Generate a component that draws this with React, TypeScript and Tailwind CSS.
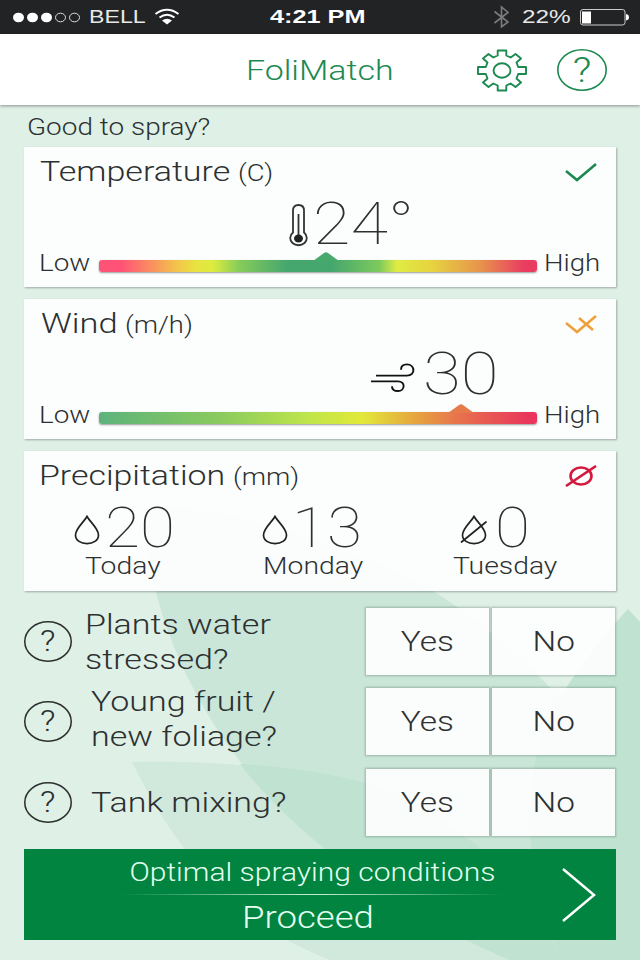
import clsx from "clsx";
import type { ReactNode } from "react";

type TextProps = { className?: string; children: ReactNode };

// The whole interface is set in a slightly extended Roboto
function Text({ className, children }: TextProps) {
  return (
    <span
      className={clsx(
        "inline-block origin-left whitespace-nowrap",
        className
      )}
    >
      {children}
    </span>
  );
}

function Leaves() {
  return (
    <svg
      className="absolute inset-0 -z-10"
      width="640"
      height="960"
      viewBox="0 0 640 960"
    >
      <rect width="640" height="960" fill="#dff0e7" />
      <path
        d="M132 762C190 761 270 763 365 783C430 805 480 850 530 900L560 960H330C240 925 180 860 132 762Z"
        fill="#d1e8dc"
      />
      <path
        d="M143 508C240 505 350 548 433 591C480 620 520 655 560 698L640 800V960H510C440 930 380 895 320 845C230 770 150 650 143 508Z"
        fill="#cae6d8"
      />
      <path
        d="M240 764C290 767 330 773 365 783C410 797 440 817 465 837C500 860 540 900 560 960H510C440 930 380 895 320 845C290 820 260 790 240 764Z"
        fill="#bfe2d1"
      />
      <path
        d="M628 609C604 635 580 665 560 698C535 735 525 800 532 850C545 900 550 930 560 960H640V622Z"
        fill="#bfe2d1"
      />
    </svg>
  );
}

function StatusBar() {
  return (
    <div className="flex h-[34px] items-center bg-[#222325] font-['Liberation_Sans'] text-[19px] text-white">
      <svg width="640" height="34" viewBox="0 0 640 34" fill="none">
        <g fill="#fff">
          <ellipse cx="18.500" cy="17.500" rx="5.500" ry="4.800" />
          <ellipse cx="32.500" cy="17.500" rx="5.500" ry="4.800" />
          <ellipse cx="46.500" cy="17.500" rx="5.500" ry="4.800" />
        </g>
        <g stroke="#ddd">
          <ellipse cx="60.500" cy="17.500" rx="5" ry="4.300" />
          <ellipse cx="74.500" cy="17.500" rx="5" ry="4.300" />
        </g>
        <g stroke="#fff" strokeWidth="2">
          <path d="M155.500 14Q167 5.500 178.500 14" />
          <path d="M159.500 17.500Q167 12 174.500 17.500" />
        </g>
        <path d="M162 20.500Q167 17 172 20.500L167 24.500Z" fill="#fff" />
        <path
          d="M494.500 11.500L508 22L501.500 27V7L508 12.500L494.500 23"
          stroke="#7b7c7e"
          strokeWidth="1.600"
        />
        <rect x="580.500" y="9.500" width="44.500" height="15.500" rx="2.500" stroke="#ccc" />
        <rect x="582" y="11.500" width="9" height="12" fill="#fff" />
        <path d="M626 14Q629 14.500 629 17.200T626 20.500Z" fill="#fff" />
      </svg>
      <div className="absolute left-0 top-0 flex h-[35px] w-full items-center">
        <Text className="ml-[89px] w-[181px] scale-x-[1.22] text-[#e8e8e8]">BELL</Text>
        <Text className="w-[252px] scale-x-[1.33] font-bold">4:21 PM</Text>
        <Text className="scale-x-[1.28] text-[#e8e8e8]">22%</Text>
      </div>
    </div>
  );
}

function Help({ className }: { className: string }) {
  return (
    <div
      className={clsx("grid shrink-0 place-items-center font-light", className)}
    >
      <svg
        className="col-start-1 row-start-1 h-full w-full overflow-visible"
        viewBox="0 0 50 42"
        preserveAspectRatio="none"
        fill="none"
        stroke="currentColor"
        strokeWidth="1.600"
      >
        <ellipse cx="25" cy="21" rx="24.200" ry="20.200" />
      </svg>
      <span className="col-start-1 row-start-1 scale-x-[1.17] leading-none">
        ?
      </span>
    </div>
  );
}

function Header() {
  return (
    <header className="flex h-[71px] items-center bg-white text-[#1c8a50] shadow-[0_1px_3px_rgba(0,0,0,0.4)]">
      <Text className="ml-[246px] mt-[3px] w-[230px] scale-x-[1.19] text-[28.5px] font-light">
        FoliMatch
      </Text>
      <svg
        width="52"
        height="44"
        viewBox="-26 -22.500 52 44"
        fill="none"
        stroke="currentColor"
        strokeWidth="1.900"
        strokeLinejoin="round"
      >
        <path d="M-4.300 -20H4.300V-15L8.700 -13L13.500 -16.500L19 -12L14.500 -8L16.200 -3.500H24V3.500H16.200L14.500 8L19 12L13.500 16.500L8.700 13L4.300 15V20H-4.300V15L-8.700 13L-13.500 16.500L-19 12L-14.500 8L-16.200 3.500H-24V-3.500H-16.200L-14.500 -8L-19 -12L-13.500 -16.500L-8.700 -13L-4.300 -15Z" />
        <ellipse rx="8.500" ry="7.200" />
      </svg>
      <Help className="ml-[29px] mt-px h-[42px] w-[50px] text-[35px]" />
    </header>
  );
}

type CardProps = {
  title: string;
  unit: string;
  status: ReactNode;
  titleClass: string;
  children: ReactNode;
};

function Card({ title, unit, titleClass, status, children }: CardProps) {
  return (
    <section className="flex h-[139.5px] w-[592px] flex-col bg-white/90 shadow-[1px_1px_2px_rgba(0,0,0,0.3)]">
      <div className="flex h-[50px] items-center justify-between pl-4 pr-[19px]">
        <h2 className="flex items-baseline">
          <Text className={clsx("text-[28px]", titleClass)}>{title}</Text>
          <Text className="scale-x-[1.14] text-[24px]">{unit}</Text>
        </h2>
        {status}
      </div>
      {children}
    </section>
  );
}

type ScaleProps = {
  bar: string;
  pointer: number;
  pointerColor: string;
};

function Scale({ bar, pointer, pointerColor }: ScaleProps) {
  return (
    <div className="flex h-[34px] items-center pl-[15px]">
      <Text className="mt-[3px] w-[60px] scale-x-[1.21] text-[23px]">Low</Text>
      <div
        className={clsx(
          "relative mt-[6px] h-[12px] w-[438px] rounded-[3px] shadow-[0_1px_2px_rgba(0,0,0,0.4)]",
          bar
        )}
      >
        <svg
          className="absolute -top-[8px]"
          style={{ left: pointer - 13 }}
          width="26"
          height="9"
          viewBox="0 0 26 9"
        >
          <path d="M0 9L11 1Q13 -0.500 15 1L26 9Z" fill={pointerColor} />
        </svg>
      </div>
      <Text className="ml-[7px] mt-[3px] scale-x-[1.2] text-[23px]">High</Text>
    </div>
  );
}

function Drop({ dry = false }: { dry?: boolean }) {
  return (
    <svg
      className="mt-[4px]"
      width="28"
      height="30"
      viewBox="0 0 28 30"
      fill="none"
      stroke="#222"
      strokeWidth="1.700"
      strokeLinecap="round"
    >
      <path d="M14 1.500C11 7 2.500 13.500 2.500 20C2.500 25.500 8 28.700 14 28.700S25.500 25.500 25.500 20C25.500 13.500 17 7 14 1.500Z" />
      {dry && <path d="M1.500 27L26 7" />}
    </svg>
  );
}

const forecast = [
  { day: "Today", amount: 20, dayPad: "ml-[12px]", numPad: "ml-[4px]" },
  { day: "Monday", amount: 13, dayPad: "ml-[2px]", numPad: "ml-[3px]" },
  { day: "Tuesday", amount: 0, dayPad: "-ml-[7px]", numPad: "ml-[7px]" },
];

function Precipitation() {
  return (
    <div className="grid grid-cols-[188px_199px_1fr] pl-[49px]">
      {forecast.map((f) => (
        <div key={f.day} className="flex flex-col">
          <div className="flex h-[54px] items-center">
            <Drop dry={f.amount === 0} />
            <Text
              className={clsx(
                "h-[54px] scale-x-[1.14] text-[56px] leading-[54px] font-thin",
                f.numPad
              )}
            >
              {f.amount}
            </Text>
          </div>
          <Text
            className={clsx(
              "w-0 scale-x-[1.18] text-[24px] leading-[22px]",
              f.dayPad
            )}
          >
            {f.day}
          </Text>
        </div>
      ))}
    </div>
  );
}

const questions = [
  { lines: ["Plants water", "stressed?"], indent: "ml-[13px] mt-px" },
  { lines: ["Young fruit /", "new foliage?"], indent: "ml-[19px] -mt-[5px]" },
  { lines: ["Tank mixing?"], indent: "ml-[19px]" },
];

function Answer({ label }: { label: string }) {
  return (
    <button className="flex h-[67px] w-[123px] items-center justify-center bg-white/90 pt-px text-[28px] font-light shadow-[0_0_2px_1px_rgba(60,90,75,0.35)]">
      <span className="scale-x-[1.19]">{label}</span>
    </button>
  );
}

function Questions() {
  return (
    <div className="mt-[17px] flex flex-col gap-[13.5px]">
      {questions.map((q) => (
        <div key={q.lines[0]} className="flex h-[67px] items-center">
          <Help className="h-[41px] w-[48px] text-[29px]" />
          <div className={clsx("flex w-[280px] flex-col", q.indent)}>
            {q.lines.map((line) => (
              <Text
                key={line}
                className="w-0 scale-x-[1.215] text-[28px] leading-[35px]"
              >
                {line}
              </Text>
            ))}
          </div>
          <div className="ml-auto flex gap-[3px] pr-px">
            <Answer label="Yes" />
            <Answer label="No" />
          </div>
        </div>
      ))}
    </div>
  );
}

export default function App() {
  return (
    <div className="relative isolate h-[960px] w-[640px] overflow-hidden font-[Roboto,sans-serif] text-[#2c3030]">
      <Leaves />
      <StatusBar />
      <Header />
      <main className="px-6 font-light">
        <div className="flex h-[42px] items-center pl-[3px] pt-[4px]">
          <Text className="scale-x-[1.215] text-[23px]">Good to spray?</Text>
        </div>

        <div className="flex flex-col gap-[12.5px]">
          <Card
            title="Temperature"
            unit="(C)"
            titleClass="w-[198px] scale-x-[1.215]"
            status={
              <svg width="32" height="20" viewBox="0 0 32 20" fill="none" stroke="#1c8a50" strokeWidth="2.600">
                <path d="M1 9L12 18L31 2" />
              </svg>
            }
          >
            <div className="flex h-[49px] items-center pl-[265px] pt-[5px]">
              <svg className="mt-[3px]" width="19" height="43" viewBox="0 0 19 43" fill="none" stroke="#333" strokeWidth="1.800">
                <path d="M4 28.500V6.500Q4 1 9.500 1T15 6.500V28.500A8.300 7.300 0 1 1 4 28.500Z" />
                <path d="M9.500 10V34" />
                <ellipse cx="9.500" cy="34.500" rx="4.500" ry="4" fill="#222" stroke="none" />
              </svg>
              <Text className="ml-[5px] scale-x-[1.14] text-[60px] font-thin">24°</Text>
            </div>
            <Scale
              bar="bg-[linear-gradient(90deg,#ff5277_0%,#ff5277_5%,#f9905f_12%,#f2c64a_18%,#e8e33f_22%,#dcec3f_26%,#86cc5a_32%,#45a66e_43%,#45a66e_53%,#7dca5c_64%,#dfec43_68%,#e6d33f_76%,#e8944c_87%,#e93c61_97%)]"
              pointer={227}
              pointerColor="#48a96d"
            />
          </Card>

          <Card
            title="Wind"
            unit="(m/h)"
            titleClass="ml-px w-[84px] scale-x-[1.23]"
            status={
              <svg width="32" height="20" viewBox="0 0 32 20" fill="none" stroke="#efa03a" strokeWidth="2.600">
                <path d="M1 9L12 18L31 2M14 4L28 16" />
              </svg>
            }
          >
            <div className="flex h-[49px] items-center pl-[347px] pt-px">
              <svg className="mt-[7px]" width="44" height="29" viewBox="0 0 44 30" preserveAspectRatio="none" fill="none" stroke="#111" strokeWidth="1.900">
                <path d="M5 13H36C45 13 44 1.500 36 1.500C32 1.500 30 4 30 7" />
                <path d="M0 19H27C35 19 34 29 27 29C23 29 21 27 21 24" />
              </svg>
              <Text className="ml-[8px] scale-x-[1.15] text-[60px] font-thin">30</Text>
            </div>
            <Scale
              bar="bg-[linear-gradient(90deg,#5db37c_0%,#8bcb5e_28%,#bfe54a_48%,#e2e93a_60%,#e6a63f_72%,#e8724d_82%,#e8365c_98%)]"
              pointer={362}
              pointerColor="#e57b4b"
            />
          </Card>

          <Card
            title="Precipitation"
            unit="(mm)"
            titleClass="-ml-px w-[194px] scale-x-[1.21]"
            status={
              <svg width="32" height="22" viewBox="0 0 32 22" fill="none" stroke="#d3193d" strokeWidth="2.600">
                <ellipse cx="16" cy="11" rx="10.500" ry="8.500" />
                <path d="M1 21L31 1" />
              </svg>
            }
          >
            <Precipitation />
          </Card>
        </div>

        <Questions />

        <button className="mt-[13.5px] flex h-[91px] w-[592px] items-center bg-[#00843f] text-[#e4ffef]">
          <div className="ml-[96px] mt-px flex w-[385px] flex-col items-center">
            <span className="scale-x-[1.2] text-[25px] leading-[43px] whitespace-nowrap">
              Optimal spraying conditions
            </span>
            <div className="h-px w-full bg-linear-to-r from-transparent via-[#c8f0d8] to-transparent" />
            <span className="mr-[10px] scale-x-[1.18] text-[31px] leading-[45px]">
              Proceed
            </span>
          </div>
          <svg className="ml-[57px]" width="34" height="54" viewBox="0 0 34 54" fill="none" stroke="#fff" strokeWidth="2.500">
            <path d="M1 1L32 27L1 53" />
          </svg>
        </button>
      </main>
    </div>
  );
}
